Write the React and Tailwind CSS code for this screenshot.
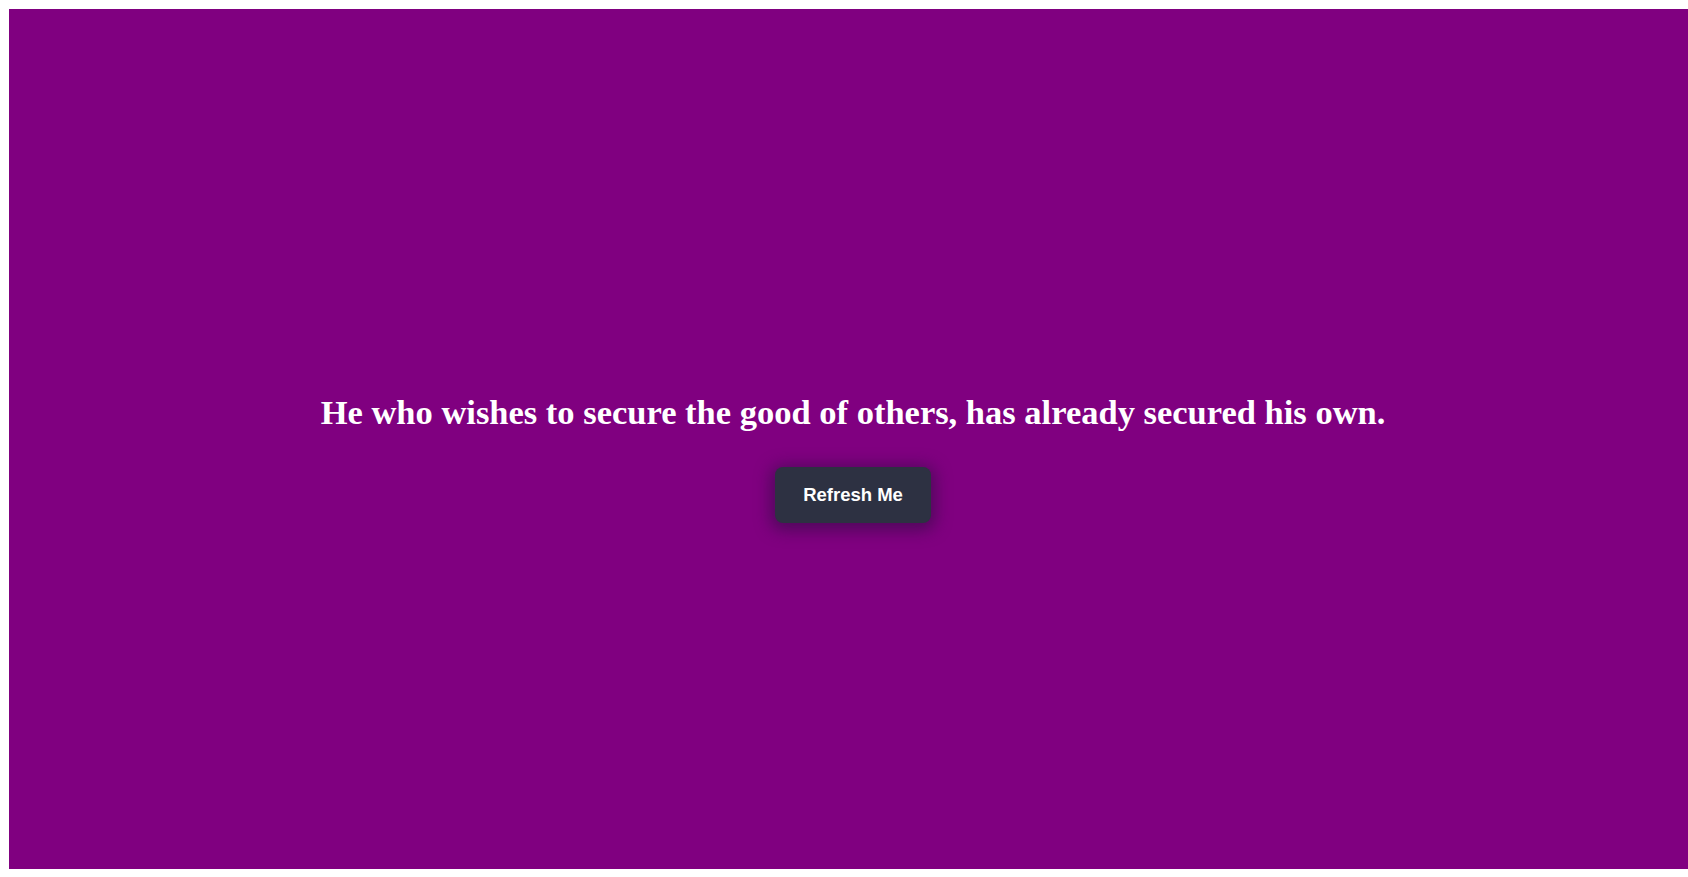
export default function App() {
  return (
    <div className="mt-[9px] ml-[9px] w-screen h-[860px] bg-[#800080] flex flex-col items-center justify-center pt-[37px]">
      <h1 className="text-white text-[34.5px] font-bold leading-[41px] m-0 font-['Liberation_Serif','Times_New_Roman',serif]">
        He who wishes to secure the good of others, has already secured his own.
      </h1>
      <button className="mt-[34px] bg-[#2d3142] text-white text-[18.5px] font-bold px-7 py-4 leading-[24px] rounded-lg shadow-[0_3px_16px_4px_rgba(45,15,65,0.6)] font-['Liberation_Sans',Arial,sans-serif]">
        Refresh Me
      </button>
    </div>
  );
}
